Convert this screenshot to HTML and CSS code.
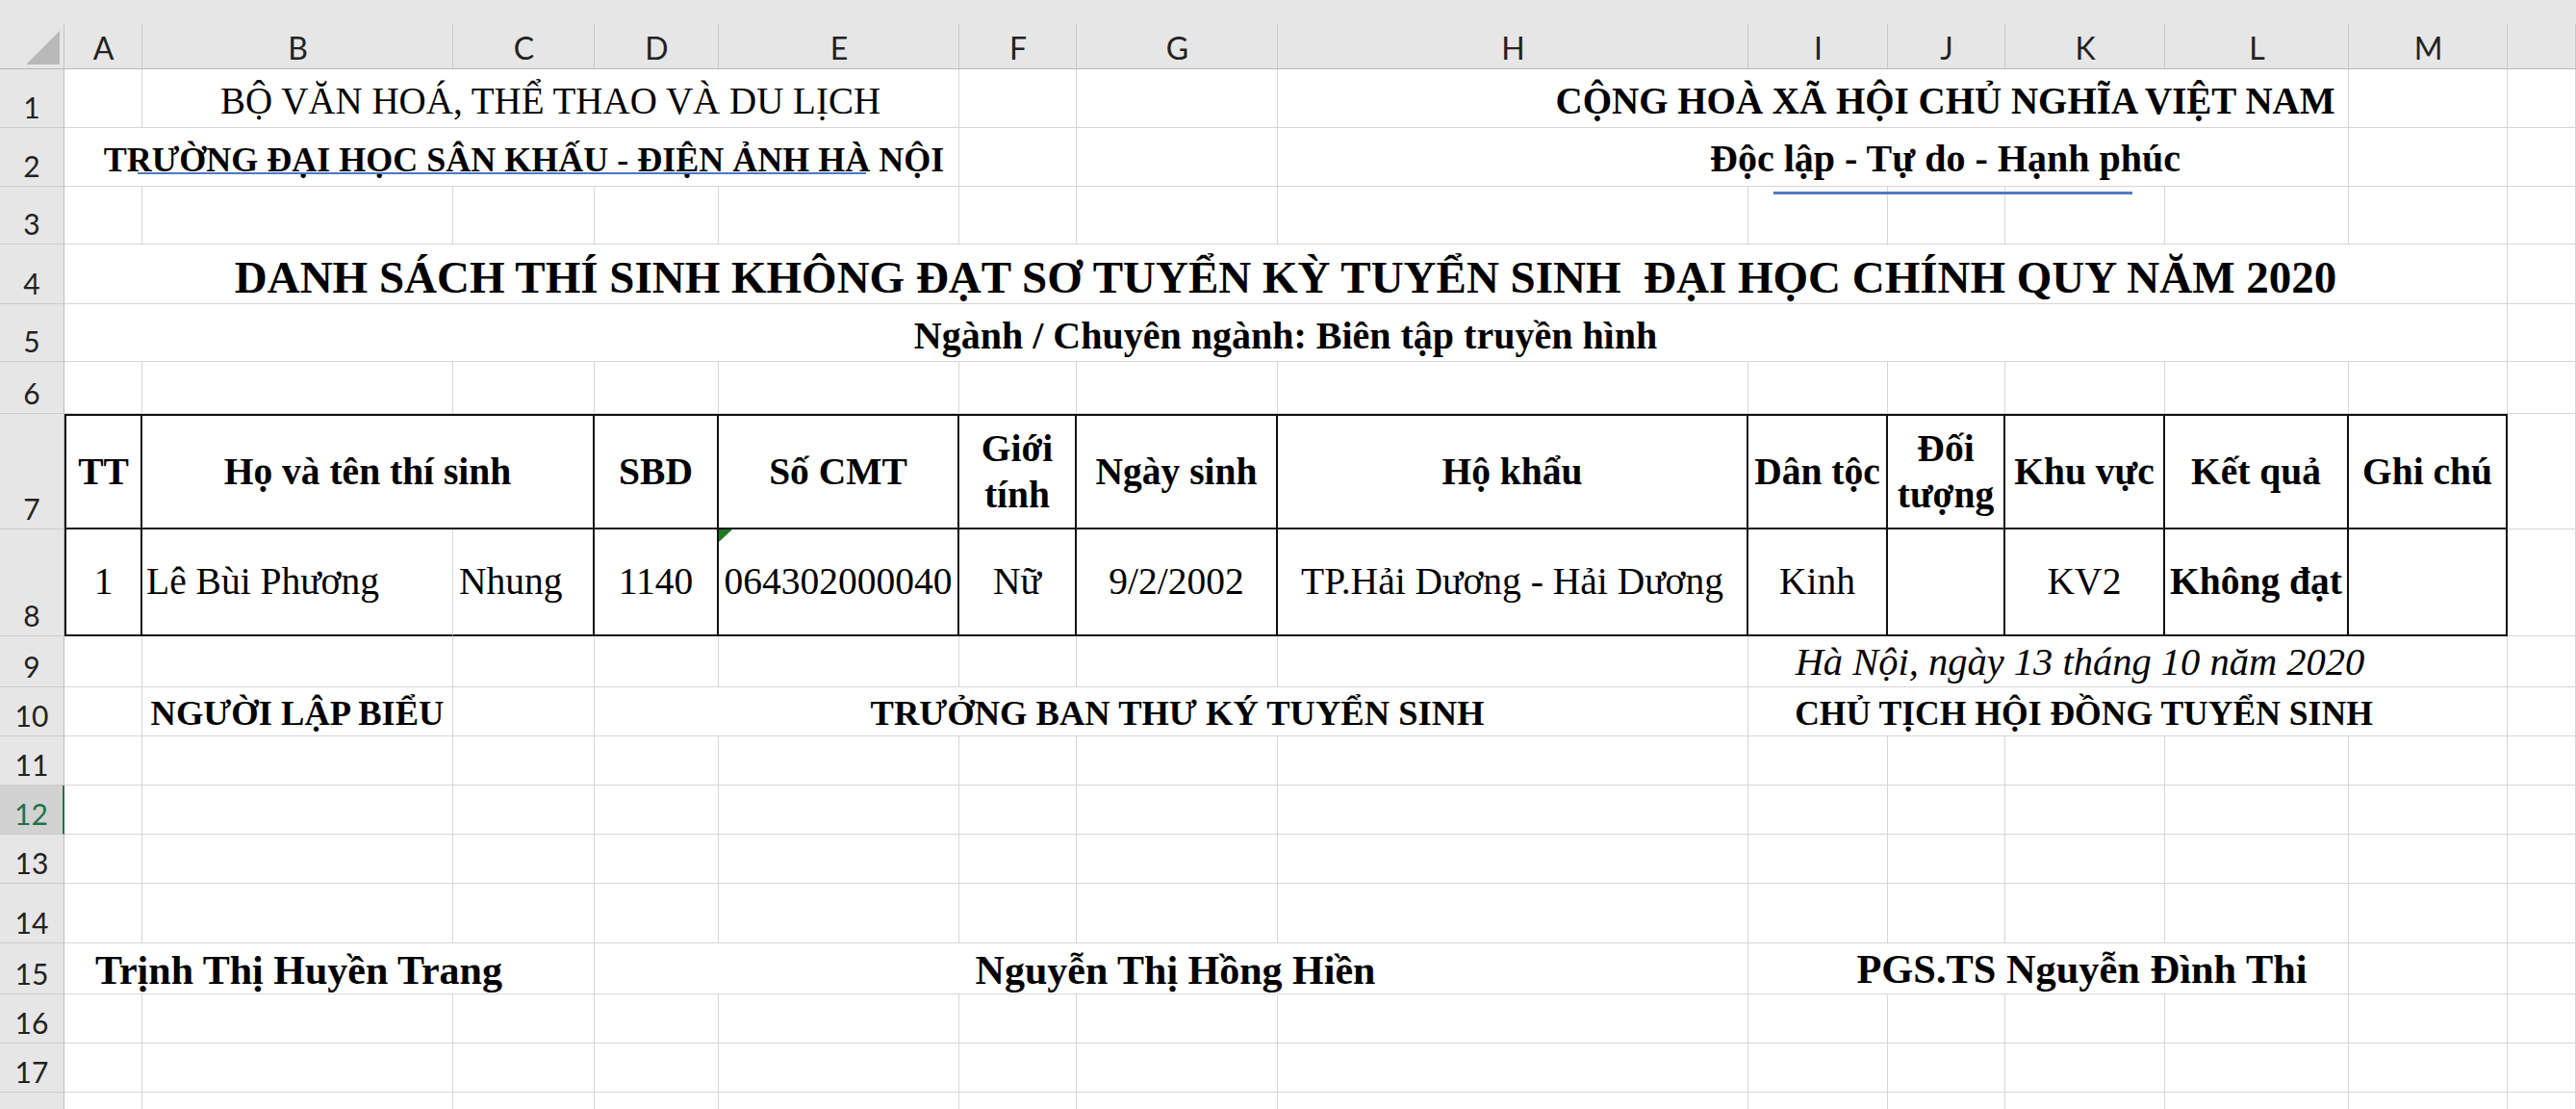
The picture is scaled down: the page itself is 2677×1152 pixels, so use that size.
FILE: index.html
```html
<!DOCTYPE html>
<html lang="vi">
<head>
<meta charset="utf-8">
<title>Danh sách thí sinh</title>
<link rel="stylesheet" href="styles.css">
</head>
<body>
<div class="sheet">
  <div class="corner"><svg class="corner-tri" width="35" height="35" viewBox="0 0 35 35"><polygon points="35,0 35,35 0,35" fill="#b9b9b9"/></svg></div>
  <div class="ch">A</div><div class="ch">B</div><div class="ch">C</div><div class="ch">D</div><div class="ch">E</div><div class="ch">F</div><div class="ch">G</div><div class="ch">H</div><div class="ch">I</div><div class="ch">J</div><div class="ch">K</div><div class="ch">L</div><div class="ch">M</div><div class="ch"></div>

  <div class="rh">1</div>
  <div class="c"></div>
  <div class="c s4 txt r1">BỘ VĂN HOÁ, THỂ THAO VÀ DU LỊCH</div>
  <div class="c"></div><div class="c"></div>
  <div class="c s5 txt r1 b nation">CỘNG HOÀ XÃ HỘI CHỦ NGHĨA VIỆT NAM</div>
  <div class="c"></div><div class="c"></div>

  <div class="rh">2</div>
  <div class="c s5 txt r2 b school">TRƯỜNG ĐẠI HỌC SÂN KHẤU - ĐIỆN ẢNH HÀ NỘI</div>
  <div class="c"></div><div class="c"></div>
  <div class="c s5 txt r2b b nation">Độc lập - Tự do - Hạnh phúc</div>
  <div class="c"></div><div class="c"></div>

  <div class="rh">3</div>
  <div class="c"></div><div class="c"></div><div class="c"></div><div class="c"></div><div class="c"></div><div class="c"></div><div class="c"></div><div class="c"></div><div class="c"></div><div class="c"></div><div class="c"></div><div class="c"></div><div class="c"></div><div class="c"></div>

  <div class="rh">4</div>
  <div class="c s13 txt r4 b">DANH SÁCH THÍ SINH KHÔNG ĐẠT SƠ TUYỂN KỲ TUYỂN SINH &nbsp;ĐẠI HỌC CHÍNH QUY NĂM 2020</div>
  <div class="c"></div>

  <div class="rh">5</div>
  <div class="c s13 txt r5 b">Ngành / Chuyên ngành: Biên tập truyền hình</div>
  <div class="c"></div>

  <div class="rh">6</div>
  <div class="c"></div><div class="c"></div><div class="c"></div><div class="c"></div><div class="c"></div><div class="c"></div><div class="c"></div><div class="c"></div><div class="c"></div><div class="c"></div><div class="c"></div><div class="c"></div><div class="c"></div><div class="c"></div>

  <div class="rh">7</div>
  <div class="t top first b">TT</div>
  <div class="t top s2 b">Họ và tên thí sinh</div>
  <div class="t top b">SBD</div>
  <div class="t top b">Số CMT</div>
  <div class="t top b">Giới<br>tính</div>
  <div class="t top b">Ngày sinh</div>
  <div class="t top b">Hộ khẩu</div>
  <div class="t top b">Dân tộc</div>
  <div class="t top b">Đối<br>tượng</div>
  <div class="t top b">Khu vực</div>
  <div class="t top b">Kết quả</div>
  <div class="t top b">Ghi chú</div>
  <div class="c"></div>

  <div class="rh">8</div>
  <div class="t first">1</div>
  <div class="t left split">Lê Bùi Phương</div>
  <div class="t left left-c">Nhung</div>
  <div class="t">1140</div>
  <div class="t flagged"><span class="tri"></span>064302000040</div>
  <div class="t">Nữ</div>
  <div class="t">9/2/2002</div>
  <div class="t">TP.Hải Dương - Hải Dương</div>
  <div class="t">Kinh</div>
  <div class="t"></div>
  <div class="t">KV2</div>
  <div class="t b">Không đạt</div>
  <div class="t"></div>
  <div class="c"></div>

  <div class="rh">9</div>
  <div class="c"></div><div class="c"></div><div class="c"></div><div class="c"></div><div class="c"></div><div class="c"></div><div class="c"></div><div class="c"></div>
  <div class="c s5 txt r9 i date">Hà Nội, ngày 13 tháng 10 năm 2020</div>
  <div class="c"></div>

  <div class="rh">10</div>
  <div class="c"></div>
  <div class="c txt r10 b">NGƯỜI LẬP BIỂU</div>
  <div class="c"></div>
  <div class="c s5 txt r10 b mid10">TRƯỞNG BAN THƯ KÝ TUYỂN SINH</div>
  <div class="c s5 txt r10 b right10">CHỦ TỊCH HỘI ĐỒNG TUYỂN SINH</div>
  <div class="c"></div>

  <div class="rh">11</div>
  <div class="c"></div><div class="c"></div><div class="c"></div><div class="c"></div><div class="c"></div><div class="c"></div><div class="c"></div><div class="c"></div><div class="c"></div><div class="c"></div><div class="c"></div><div class="c"></div><div class="c"></div><div class="c"></div>

  <div class="rh sel">12</div>
  <div class="c"></div><div class="c"></div><div class="c"></div><div class="c"></div><div class="c"></div><div class="c"></div><div class="c"></div><div class="c"></div><div class="c"></div><div class="c"></div><div class="c"></div><div class="c"></div><div class="c"></div><div class="c"></div>

  <div class="rh">13</div>
  <div class="c"></div><div class="c"></div><div class="c"></div><div class="c"></div><div class="c"></div><div class="c"></div><div class="c"></div><div class="c"></div><div class="c"></div><div class="c"></div><div class="c"></div><div class="c"></div><div class="c"></div><div class="c"></div>

  <div class="rh">14</div>
  <div class="c"></div><div class="c"></div><div class="c"></div><div class="c"></div><div class="c"></div><div class="c"></div><div class="c"></div><div class="c"></div><div class="c"></div><div class="c"></div><div class="c"></div><div class="c"></div><div class="c"></div><div class="c"></div>

  <div class="rh">15</div>
  <div class="c s3 txt r15 b left15">Trịnh Thị Huyền Trang</div>
  <div class="c s5 txt r15 b mid15">Nguyễn Thị Hồng Hiền</div>
  <div class="c s4 txt r15 b right15">PGS.TS Nguyễn Đình Thi</div>
  <div class="c"></div><div class="c"></div>

  <div class="rh">16</div>
  <div class="c"></div><div class="c"></div><div class="c"></div><div class="c"></div><div class="c"></div><div class="c"></div><div class="c"></div><div class="c"></div><div class="c"></div><div class="c"></div><div class="c"></div><div class="c"></div><div class="c"></div><div class="c"></div>

  <div class="rh">17</div>
  <div class="c"></div><div class="c"></div><div class="c"></div><div class="c"></div><div class="c"></div><div class="c"></div><div class="c"></div><div class="c"></div><div class="c"></div><div class="c"></div><div class="c"></div><div class="c"></div><div class="c"></div><div class="c"></div>

  <div class="rh"></div>
  <div class="c"></div><div class="c"></div><div class="c"></div><div class="c"></div><div class="c"></div><div class="c"></div><div class="c"></div><div class="c"></div><div class="c"></div><div class="c"></div><div class="c"></div><div class="c"></div><div class="c"></div><div class="c"></div>

  <div class="shape line-school"></div>
  <div class="shape line-motto"></div>
</div>
</body>
</html>
```

FILE: styles.css
```css
* { box-sizing: border-box; }

html, body {
  margin: 0;
  padding: 0;
  background: #ffffff;
}

body {
  width: 2677px;
  height: 1152px;
  overflow: hidden;
}

.sheet {
  position: relative;
  display: grid;
  grid-template-columns: 67px 81px 323px 147px 129px 250px 122px 209px 489px 145px 122px 166px 191px 165px 71px;
  grid-template-rows: 72px 61px 61px 60px 62px 60px 54px 120px 111px 53px 51px 51px 51px 51px 62px 53px 51px 51px 51px;
  font-family: "Liberation Serif", "Times New Roman", serif;
  color: #000;
  font-size: 39.5px;
}

/* headers */
.corner {
  background: #e6e6e6 linear-gradient(#c4c4c4, #c4c4c4) no-repeat right bottom / 1px 46px;
  border-bottom: 1px solid #b8b8b8;
  display: flex;
  justify-content: flex-end;
  align-items: flex-end;
  padding: 0 5px 4px 0;
}

.corner-tri { display: block; }

.ch {
  background: #e6e6e6 linear-gradient(#c8c8c8, #c8c8c8) no-repeat right bottom / 1px 46px;
  border-bottom: 1px solid #b8b8b8;
  display: flex;
  justify-content: center;
  align-items: flex-end;
  padding-bottom: 5px;
  font-family: Lato, "Noto Sans", sans-serif;
  font-size: 32px;
  line-height: 1;
  color: #222;
}

.rh {
  background: #e6e6e6;
  border-right: 1px solid #bebebe;
  border-bottom: 1px solid #cbcbcb;
  display: flex;
  justify-content: center;
  align-items: flex-end;
  padding-bottom: 6px;
  font-family: Lato, "Noto Sans", sans-serif;
  font-size: 30px;
  line-height: 1;
  color: #222;
}

.rh.sel {
  background: #d2d2d2;
  color: #217346;
  border-right: 2px solid #217346;
}

/* cells */
.c {
  border-right: 1px solid #d6d6d6;
  border-bottom: 1px solid #d6d6d6;
  min-width: 0;
}

.s2 { grid-column: span 2; }
.s3 { grid-column: span 3; }
.s4 { grid-column: span 4; }
.s5 { grid-column: span 5; }
.s13 { grid-column: span 13; }

.txt {
  display: flex;
  justify-content: center;
  align-items: flex-end;
  white-space: nowrap;
  line-height: 1.15;
}

.b { font-weight: bold; }
.i { font-style: italic; }

.r1 { font-size: 39px; padding-bottom: 4.5px; }
.r2 { font-size: 36px; padding-bottom: 5.5px; }
.r2b { font-size: 40px; padding-bottom: 5px; }
.r4 { font-size: 47px; padding-bottom: 0; }
.r5 { font-size: 40px; padding-bottom: 3.5px; }
.r9 { font-size: 40.5px; padding-bottom: 1.5px; }
.r10 { font-size: 36.5px; padding-bottom: 2px; }
.r15 { font-size: 42px; padding-bottom: 0; }

.nation { padding-left: 275px; }
.school { padding-left: 26px; }
.date { padding-right: 99px; }
.mid10 { padding-left: 13px; }
.right10 { padding-right: 91px; font-size: 35.6px; }
.left15 { padding-right: 63px; }
.mid15 { padding-left: 9px; }
.right15 { padding-left: 70px; font-size: 42.4px; }

/* bordered table */
.t {
  display: flex;
  justify-content: center;
  align-items: center;
  text-align: center;
  white-space: nowrap;
  line-height: 1.22;
  border-right: 2px solid #111;
  border-bottom: 2px solid #111;
  min-width: 0;
}

.t.top { border-top: 2px solid #111; }
.t.first { border-left: 2px solid #111; }
.t.left { justify-content: flex-start; padding-left: 4px; }
.t.left-c { padding-left: 6px; }
.t.split { border-right: 1px solid #d6d6d6; }

.flagged { position: relative; }

.tri {
  position: absolute;
  top: 0;
  left: 0;
  width: 0;
  height: 0;
  border-top: 13px solid #1f7a1f;
  border-right: 14px solid transparent;
}

/* drawn shapes */
.shape {
  position: absolute;
}

.line-school {
  left: 143px;
  top: 179px;
  width: 757px;
  height: 2px;
  background: #4a78c4;
}

.line-motto {
  left: 1843px;
  top: 199px;
  width: 373px;
  height: 3px;
  background: #4f7cc2;
}
```
